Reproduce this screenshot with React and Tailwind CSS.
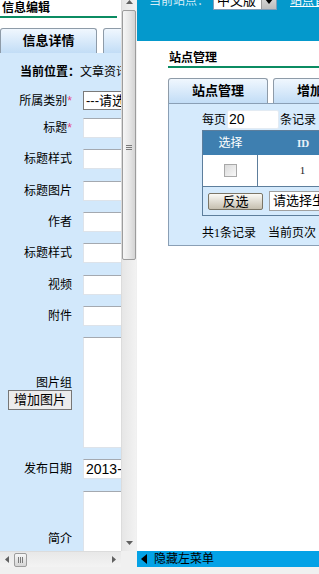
import React from "react";

const fields = [
  { label: "标题", star: true, mt: "mt-[8px]" },
  { label: "标题样式", mt: "mt-[11px]" },
  { label: "标题图片", mt: "mt-[12px]" },
  { label: "作者", mt: "mt-[11px]" },
  { label: "标题样式", mt: "mt-[11px]" },
  { label: "视频", mt: "mt-[12px]" },
  { label: "附件", mt: "mt-[11px]" },
];

const inputBox =
  "ml-[11px] w-[130px] shrink-0 bg-white border border-[#dde3ea] border-t-[#a4a9b0]";

const tabCls =
  "shrink-0 h-[25px] flex items-center justify-center rounded-t-[3px] border border-b-0 border-[#8e9ba8] bg-gradient-to-b from-[#f0f7fe] to-[#c2ddf6] text-[13px] font-bold text-black";

const Arrow = ({ dir, className = "" }) => {
  const pts = {
    up: "0,4 3.5,0 7,4",
    down: "0,0 3.5,4 7,0",
    left: "4,0 0,3.5 4,7",
    right: "0,0 4,3.5 0,7",
  };
  const size = dir === "up" || dir === "down" ? [7, 4] : [4, 7];
  return (
    <svg width={size[0]} height={size[1]} className={className}>
      <polygon points={pts[dir]} fill="#606060" />
    </svg>
  );
};

const VScroll = () => (
  <div className="w-[15px] h-full flex flex-col items-center bg-gradient-to-r from-[#e6e6e6] to-[#f2f2f2] border-l border-[#dcdcdc]">
    <div className="h-[10px] w-full flex justify-center">
      <Arrow dir="up" />
    </div>
    <div className="w-[14px] h-[250px] shrink-0 rounded-[2px] border border-[#9c9c9c] bg-gradient-to-r from-[#f6f6f6] via-[#e8e8e8] to-[#d4d4d4] flex flex-col items-center pt-[134px] gap-[1px]">
      <div className="w-[6px] h-[1px] bg-[#7a7a7a]" />
      <div className="w-[6px] h-[1px] bg-[#7a7a7a]" />
      <div className="w-[6px] h-[1px] bg-[#7a7a7a]" />
    </div>
    <div className="flex-1" />
    <div className="h-[16px] w-full flex justify-center pt-[6px]">
      <Arrow dir="down" />
    </div>
  </div>
);

const HScroll = () => (
  <div className="h-[16px] flex shrink-0">
    <div className="w-[121px] h-full flex items-center bg-gradient-to-b from-[#e8e8e8] to-[#f3f3f3] border-t border-[#dcdcdc]">
      <div className="w-[14px] flex justify-center">
        <Arrow dir="left" />
      </div>
      <div className="w-[13px] h-[14px] rounded-[2px] border border-[#9c9c9c] bg-gradient-to-b from-[#f6f6f6] to-[#d6d6d6] flex items-center justify-center gap-[1px]">
        <div className="w-[1px] h-[6px] bg-[#7a7a7a]" />
        <div className="w-[1px] h-[6px] bg-[#7a7a7a]" />
        <div className="w-[1px] h-[6px] bg-[#7a7a7a]" />
      </div>
      <div className="flex-1" />
      <div className="w-[14px] flex justify-center">
        <Arrow dir="right" />
      </div>
    </div>
    <div className="w-[15px] h-full bg-[#f0f0f0]" />
  </div>
);

const LeftFrame = () => (
  <div className="w-[136px] h-[567px] flex flex-col shrink-0">
    <div className="h-[551px] flex">
      <div className="w-[121px] h-full bg-white overflow-hidden flex flex-col">
        <div className="w-[117px] h-[18px] shrink-0 pl-[2px] pt-[1px] leading-[15px] text-[12px] font-bold border-b-2 border-[#0b8c62]">
          信息编辑
        </div>
        <div className="mt-[10px] flex gap-[6px] shrink-0 w-[240px]">
          <div className={`${tabCls} w-[97px]`}>信息详情</div>
          <div className={`${tabCls} w-[100px]`}>扩展信息</div>
        </div>
        <div className="flex-1 w-[240px] bg-[#d2e8fb] pt-[10px] flex flex-col">
          <div className="h-[18px] flex items-center pl-[20px] text-[12px] leading-none whitespace-nowrap">
            <span className="font-bold">当前位置：</span>
            <span>文章资讯</span>
          </div>
          <div className="mt-[10px] flex items-center h-[19px]">
            <div className="w-[72px] text-right text-[12px] leading-none">
              所属类别<span className="text-[#e0407a]">*</span>
            </div>
            <div className="ml-[11px] w-[130px] h-[19px] bg-white border border-[#7a7a7a] text-[13px] leading-[17px] pl-[2px] whitespace-nowrap">
              ---请选择---
            </div>
          </div>
          {fields.map((f, i) => (
            <div key={i} className={`${f.mt} flex items-center h-[20px]`}>
              <div className="w-[72px] text-right text-[12px] leading-none">
                {f.label}
                {f.star && <span className="text-[#e0407a]">*</span>}
              </div>
              <div className={`${inputBox} h-[20px]`} />
            </div>
          ))}
          <div className="mt-[11px] flex items-center h-[111px]">
            <div className="w-[72px] flex flex-col items-end">
              <div className="text-[12px] leading-[14px]">图片组</div>
              <div className="w-[64px] h-[20px] flex items-center justify-center bg-[#ececec] border border-[#767676] text-[13px] leading-none">
                增加图片
              </div>
            </div>
            <div className={`${inputBox} h-[111px]`} />
          </div>
          <div className="mt-[11px] flex items-center h-[20px]">
            <div className="w-[72px] text-right text-[12px] leading-none">发布日期</div>
            <div className={`${inputBox} h-[20px] text-[14px] leading-[18px] pl-[2px] whitespace-nowrap`}>
              2013-05-20
            </div>
          </div>
          <div className="mt-[12px] flex items-center h-[96px] shrink-0">
            <div className="w-[72px] text-right text-[12px] leading-none">简介</div>
            <div className={`${inputBox} h-[96px]`} />
          </div>
        </div>
      </div>
      <VScroll />
    </div>
    <HScroll />
  </div>
);

const RightFrame = () => (
  <div className="flex-1 h-[567px] flex flex-col border-l border-[#f0f0f0] overflow-hidden">
    <div className="h-[41px] shrink-0 bg-[#0499cc] overflow-hidden">
      <div className="-mt-[8px] h-[18px] flex items-center pl-[12px] whitespace-nowrap">
        <span className="text-[12px] leading-none text-[#d6edf8]">当前站点：</span>
        <div className="ml-[4px] shrink-0 w-[64px] h-[18px] flex bg-white border border-[#7f9db9]">
          <span className="flex-1 text-[13px] leading-[16px] pl-[3px]">中文版</span>
          <div className="w-[15px] h-full bg-gradient-to-b from-[#e4e4e4] to-[#bdbdbd] border-l border-[#9a9a9a] flex items-center justify-center">
            <svg width="8" height="5">
              <polygon points="0,0 4,5 8,0" fill="#000" />
            </svg>
          </div>
        </div>
        <span className="ml-[13px] text-[12px] leading-none text-white underline">站点管理</span>
      </div>
    </div>
    <div className="flex-1 bg-white pl-[31px] flex flex-col overflow-hidden">
      <div className="mt-[9px] h-[18px] shrink-0 pl-[1px] pt-[1px] leading-[15px] text-[12px] font-bold border-b-2 border-[#0b8c62]">
        站点管理
      </div>
      <div className="mt-[10px] flex gap-[5px] shrink-0 w-[240px]">
        <div className={`${tabCls} w-[100px]`}>站点管理</div>
        <div className={`${tabCls} w-[100px]`}>增加站点</div>
      </div>
      <div className="w-[230px] h-[143px] shrink-0 border border-[#8a9fb5] bg-[#d5eafc] pl-[33px] pt-[6px] flex flex-col">
        <div className="h-[19px] flex items-center whitespace-nowrap">
          <span className="text-[12px] leading-none">每页</span>
          <div className="ml-[1px] w-[52px] h-[19px] bg-white rounded-[2px] border border-[#e3ebf3] text-[14px] leading-[17px] pl-[1px]">
            20
          </div>
          <span className="ml-[1px] text-[12px] leading-none">条记录</span>
        </div>
        <div className="mt-[1px] w-[200px] shrink-0 border border-[#5d7e9c] flex flex-col">
          <div className="h-[24px] bg-[#3e7fb0] flex items-center">
            <div className="w-[55px] text-center text-[12px] leading-none text-white">选择</div>
            <div className="w-[90px] text-center text-[11px] font-bold leading-none text-[#eaf2f8] font-['Liberation_Serif',serif]">
              ID
            </div>
          </div>
          <div className="h-[31px] bg-white flex">
            <div className="w-[55px] h-full border-r border-[#5d7e9c] flex items-center justify-center">
              <div className="w-[13px] h-[13px] border border-[#a8a8a8] bg-gradient-to-br from-[#dadada] to-[#f8f8f8]" />
            </div>
            <div className="w-[89px] h-full flex items-center justify-center text-[11px] leading-none text-[#222222] font-['Liberation_Serif',serif]">
              1
            </div>
          </div>
          <div className="h-[29px] border-t border-[#5d7e9c] bg-[#d5eafc] flex items-center pl-[5px]">
            <div className="w-[55px] h-[17px] shrink-0 flex items-center justify-center rounded-[2px] border border-[#7b7566] bg-gradient-to-b from-[#fbfaf6] to-[#c6bfaf] text-[13px] leading-none">
              反选
            </div>
            <div className="ml-[6px] w-[120px] h-[20px] shrink-0 bg-white border border-[#a0a0a0] text-[13px] leading-[18px] pl-[3px] whitespace-nowrap">
              请选择生成方式
            </div>
          </div>
        </div>
        <div className="mt-[10px] text-[12px] leading-[14px] whitespace-nowrap">
          共<span className="font-['Liberation_Serif',serif]">1</span>条记录
          <span className="ml-[12px]">当前页次 1/1页</span>
        </div>
      </div>
    </div>
    <div className="h-[16px] shrink-0 bg-[#04a2e6] flex items-center pl-[4px]">
      <svg width="6" height="10">
        <polygon points="6,0 0,5 6,10" fill="#000" />
      </svg>
      <span className="ml-[7px] text-[12px] leading-none text-black">隐藏左菜单</span>
    </div>
  </div>
);

export default function App() {
  return (
    <div className="w-[319px] h-[574px] overflow-hidden bg-[#f0f0f0] font-['Liberation_Sans','Noto_Sans_CJK_SC',sans-serif] text-black">
      <div className="flex h-[567px]">
        <LeftFrame />
        <RightFrame />
      </div>
    </div>
  );
}
